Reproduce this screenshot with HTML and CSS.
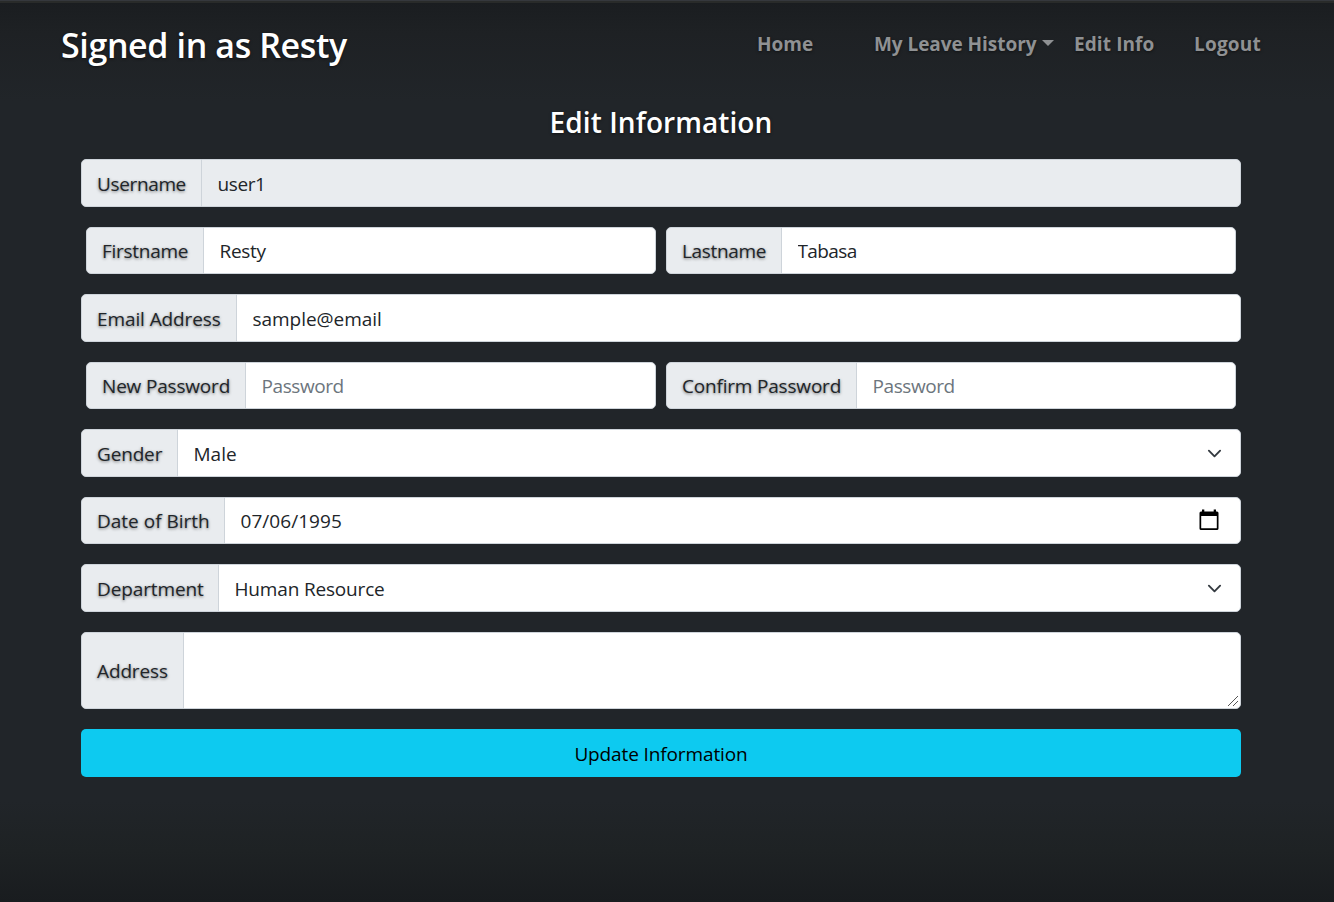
FILE: index.html
```
<!DOCTYPE html>
<html lang="en">
<head>
<meta charset="utf-8">
<title>Edit Information</title>
<link rel="stylesheet" href="styles.css">
</head>
<body>
<div class="cover">
  <header class="masthead">
    <h3 class="brand">Signed in as Resty</h3>
    <nav class="nav">
      <a class="nav-link home">Home</a>
      <a class="nav-link history">My Leave History</a>
      <span class="caret"></span>
      <a class="nav-link edit">Edit Info</a>
      <a class="nav-link logout">Logout</a>
    </nav>
  </header>
  <main class="form">
    <h4 class="title">Edit Information</h4>
    <div class="group">
      <label class="label w-user">Username</label>
      <input class="control v-user disabled" type="text" value="user1" readonly>
    </div>
    <div class="pair">
      <div class="group">
        <label class="label w-first">Firstname</label>
        <input class="control v-first" type="text" value="Resty">
      </div>
      <div class="group">
        <label class="label w-last">Lastname</label>
        <input class="control v-last" type="text" value="Tabasa">
      </div>
    </div>
    <div class="group">
      <label class="label w-email">Email Address</label>
      <input class="control v-email" type="text" value="sample@email">
    </div>
    <div class="pair">
      <div class="group">
        <label class="label w-new">New Password</label>
        <input class="control v-pass" type="password" placeholder="Password">
      </div>
      <div class="group">
        <label class="label w-confirm">Confirm Password</label>
        <input class="control v-pass" type="password" placeholder="Password">
      </div>
    </div>
    <div class="group">
      <label class="label w-gender">Gender</label>
      <select class="control v-gender"><option>Male</option></select>
      <svg class="chevron" viewBox="0 0 16 16"><path d="M2 5l6 6 6-6"/></svg>
    </div>
    <div class="group">
      <label class="label w-birth">Date of Birth</label>
      <input class="control v-birth" type="text" value="07/06/1995">
      <svg class="calendar" viewBox="0 0 20 22"><path fill-rule="evenodd" d="M3 0.5h2.3v2h9.4v-2H17v2h1a1.6 1.6 0 0 1 1.5 1.6v15.300a1.600 1.600 0 0 1-1.600 1.600H2.100a1.600 1.600 0 0 1-1.600-1.600V4.100A1.600 1.600 0 0 1 2 2.500h1zM2.200 7v12.300h15.600V7z"/></svg>
    </div>
    <div class="group">
      <label class="label w-dept">Department</label>
      <select class="control v-dept"><option>Human Resource</option></select>
      <svg class="chevron" viewBox="0 0 16 16"><path d="M2 5l6 6 6-6"/></svg>
    </div>
    <div class="group tall">
      <label class="label w-addr">Address</label>
      <textarea class="control"></textarea>
      <svg class="grip" viewBox="0 0 10 10"><path d="M0 10L10 0M5 10l5-5"/></svg>
    </div>
    <button class="submit">Update Information</button>
  </main>
</div>
</body>
</html>
```
FILE: styles.css
```
* { box-sizing: border-box; }
body {
  margin: 0;
  height: 902px;
  overflow: hidden;
  background: #212529;
  font-family: "Open Sans", "Noto Sans", sans-serif;
  font-size: 19px;
}
.cover {
  height: 902px;
  border-top: 1px solid #35383d;
  box-shadow: inset 0 2px 0 #292b2a;
  background: linear-gradient(#1a1d20 0, #1e2124 32px, #212529 100px, #212529 800px, #1e2224 850px, #191c1f 901px);
}
.masthead {
  display: flex;
  justify-content: space-between;
  height: 88px;
  padding: 0 73px 0 61px;
}
.brand {
  margin: 0;
  line-height: 88px;
  font-size: 34px;
  font-weight: 600;
  letter-spacing: -.38px;
  color: #fff;
  white-space: nowrap;
  text-shadow: 0 1px 3px rgba(0, 0, 0, .5);
}
.nav {
  display: flex;
  height: 88px;
  line-height: 86px;
  font-size: 19px;
  font-weight: 700;
  color: #8f9193;
}
.nav-link {
  flex: none;
  white-space: nowrap;
  text-shadow: 0 1px 3px rgba(0, 0, 0, .5);
}
.home { width: 117px; }
.history { width: 168px; letter-spacing: -.05px; }
.edit { width: 120px; letter-spacing: .1px; }
.logout { width: 67px; letter-spacing: .2px; }
.caret {
  align-self: flex-start;
  margin: 39px 20px 0 0;
  border: 6px solid transparent;
  border-top-color: #8f9193;
  border-bottom: 0;
}
.form {
  display: flex;
  flex-direction: column;
  gap: 20px;
  width: 1160px;
  margin-left: 81px;
}
.title {
  height: 50px;
  margin: 0;
  line-height: 66px;
  font-size: 28px;
  font-weight: 600;
  letter-spacing: .08px;
  color: #fff;
  text-align: center;
  text-shadow: 0 1px 3px rgba(0, 0, 0, .5);
}
.group {
  position: relative;
  display: flex;
  flex: 1 1 0;
  min-height: 47.5px;
  max-height: 47.5px;
}
.tall { min-height: 77.5px; max-height: 77.5px; }
.pair { display: flex; gap: 10px; height: 47.5px; padding: 0 5px; }
.label {
  display: flex;
  align-items: center;
  flex: none;
  padding: 2px 0 0 15px;
  border: 1px solid #ced4da;
  border-radius: 5px 0 0 5px;
  background: #e9ecef;
  color: #212529;
  white-space: nowrap;
  text-shadow: 0 1px 3px rgba(0, 0, 0, .5);
}
.control {
  flex: 1;
  min-width: 0;
  margin: 0 0 0 -1px;
  padding: 2px 15px 0 15.500px;
  border: 1px solid #ced4da;
  border-radius: 0 5px 5px 0;
  outline: 0;
  background: #fff;
  color: #212529;
  font: inherit;
  appearance: none;
  resize: none;
}
.control::placeholder { color: #6c757d; opacity: 1; }
.disabled { background: #e9ecef; }
.w-user { width: 121px; letter-spacing: -.36px; }
.w-first { width: 118px; letter-spacing: -.28px; }
.w-last { width: 116px; letter-spacing: -.34px; }
.w-email { width: 156px; letter-spacing: -.1px; }
.w-new { width: 160px; letter-spacing: -.18px; }
.w-confirm { width: 191px; letter-spacing: -.19px; }
.w-gender { width: 97px; letter-spacing: -.16px; }
.w-birth { width: 144px; }
.w-dept { width: 138px; letter-spacing: -.12px; }
.w-addr { width: 103px; letter-spacing: -.13px; }
.v-user { letter-spacing: -.4px; }
.v-first { letter-spacing: -.3px; }
.v-last { letter-spacing: -.6px; }
.v-email { letter-spacing: -.04px; }
.v-birth { letter-spacing: .05px; }
.v-pass { letter-spacing: -.42px; }
.v-dept { letter-spacing: -.17px; }
.chevron {
  position: absolute;
  right: 19px;
  top: 16.500px;
  width: 15px;
  height: 15px;
  fill: none;
  stroke: #343a40;
  stroke-width: 2;
  stroke-linecap: round;
  stroke-linejoin: round;
}
.calendar { position: absolute; right: 22px; top: 12px; width: 20px; height: 22px; }
.grip {
  position: absolute;
  right: 3px;
  bottom: 3px;
  width: 10px;
  height: 10px;
  stroke: #555;
  stroke-width: 1;
}
.submit {
  height: 47.5px;
  padding: 3px 0 0;
  border: 0;
  border-radius: 5px;
  background: #0dcaf0;
  color: #000;
  font: inherit;
  letter-spacing: -.12px;
}
```
